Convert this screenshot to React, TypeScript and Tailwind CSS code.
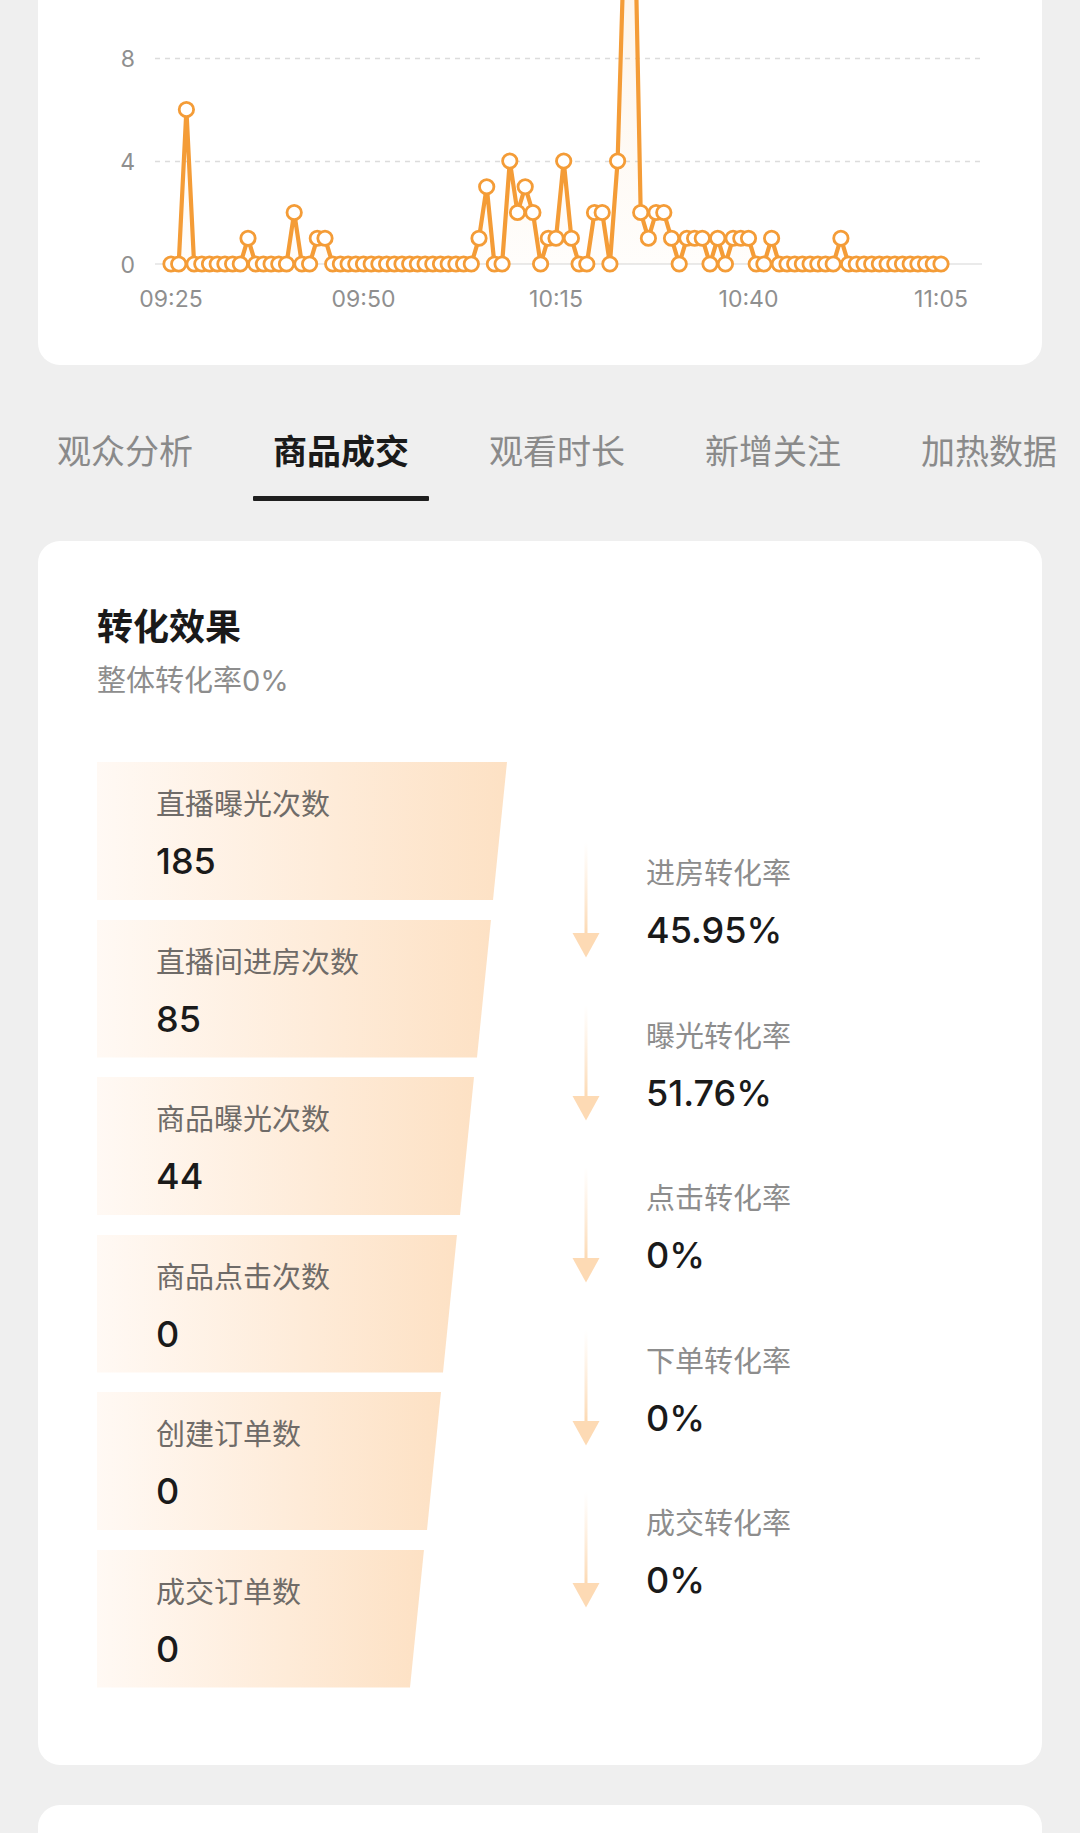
import React from "react";

const z = (n: number) => Array.from({ length: n }, () => 0);
const data: number[] = [
  ...[0, 0, 6, 0, 0, 0, 0, 0, 0, 0, 1, 0, 0, 0, 0, 0, 2, 0, 0, 1, 1],
  ...z(19),
  ...[1, 3, 0, 0, 4, 2, 3, 2, 0, 1, 1, 4, 1, 0, 0, 2, 2, 0, 4, 14, 17, 2, 1, 2, 2, 1, 0, 1, 1, 1, 0, 1, 0, 1, 1, 1, 0, 0, 1],
  ...z(8),
  1,
  ...z(13),
];

const X0 = 171;
const DX = 7.7;
const BASE = 264;
const UNIT = 25.75;

function Chart() {
  const pts = data.map((v, i) => [X0 + i * DX, BASE - v * UNIT] as const);
  const line = pts.map((p, i) => `${i === 0 ? "M" : "L"}${p[0].toFixed(1)} ${p[1].toFixed(1)}`).join(" ");
  const area = `${line} L${pts[pts.length - 1][0].toFixed(1)} ${BASE} L${pts[0][0].toFixed(1)} ${BASE} Z`;
  const xLabels = [
    { x: 171, t: "09:25" },
    { x: 363.5, t: "09:50" },
    { x: 556, t: "10:15" },
    { x: 748.5, t: "10:40" },
    { x: 941, t: "11:05" },
  ];
  const yLabels = [
    { y: 59, t: "8" },
    { y: 162, t: "4" },
    { y: 265, t: "0" },
  ];
  return (
    <svg width={1004} height={365} viewBox="38 0 1004 365" className="block">
      <defs>
        <linearGradient id="areaFill" x1="0" y1="-200" x2="0" y2="264" gradientUnits="userSpaceOnUse">
          <stop offset="0" stopColor="#f5a03c" stopOpacity="0.16" />
          <stop offset="1" stopColor="#f5a03c" stopOpacity="0.02" />
        </linearGradient>
      </defs>
      <line x1={155} x2={982} y1={58.5} y2={58.5} stroke="#dcdcdc" strokeWidth={1.3} strokeDasharray="5 5" />
      <line x1={155} x2={982} y1={161.5} y2={161.5} stroke="#dcdcdc" strokeWidth={1.3} strokeDasharray="5 5" />
      <line x1={155} x2={982} y1={264} y2={264} stroke="#e3e3e3" strokeWidth={1.3} />
      {yLabels.map((l) => (
        <text key={l.t} x={135} y={l.y} textAnchor="end" dominantBaseline="central" fontSize={23} fill="#8f8f8f" fontFamily="Inter, 'Noto Sans', sans-serif">
          {l.t}
        </text>
      ))}
      {xLabels.map((l) => (
        <text key={l.t} x={l.x} y={299} textAnchor="middle" dominantBaseline="central" fontSize={23} fill="#8f8f8f" fontFamily="Inter, 'Noto Sans', sans-serif">
          {l.t}
        </text>
      ))}
      <path d={area} fill="url(#areaFill)" />
      <path d={line} fill="none" stroke="#f49c37" strokeWidth={4.2} strokeLinejoin="round" />
      {pts.map((p, i) => (
        <circle key={i} cx={p[0]} cy={p[1]} r={7.2} fill="#ffffff" stroke="#f49c37" strokeWidth={2.8} />
      ))}
    </svg>
  );
}

const tabs = ["观众分析", "商品成交", "观看时长", "新增关注", "加热数据"];

const bars = [
  { label: "直播曝光次数", value: "185", w: "w-[410px]" },
  { label: "直播间进房次数", value: "85", w: "w-[394px]" },
  { label: "商品曝光次数", value: "44", w: "w-[377px]" },
  { label: "商品点击次数", value: "0", w: "w-[360px]" },
  { label: "创建订单数", value: "0", w: "w-[344px]" },
  { label: "成交订单数", value: "0", w: "w-[327px]" },
];

const rates = [
  { label: "进房转化率", value: "45.95%" },
  { label: "曝光转化率", value: "51.76%" },
  { label: "点击转化率", value: "0%" },
  { label: "下单转化率", value: "0%" },
  { label: "成交转化率", value: "0%" },
];

function Arrow({ id }: { id: string }) {
  return (
    <svg width={28} height={116} viewBox="0 0 28 116" className="block shrink-0">
      <defs>
        <linearGradient id={id} x1="0" y1="0" x2="0" y2="1">
          <stop offset="0" stopColor="#fde3c8" stopOpacity="0" />
          <stop offset="1" stopColor="#fcd9b2" stopOpacity="1" />
        </linearGradient>
      </defs>
      <rect x={12.5} y={0} width={3} height={92} fill={`url(#${id})`} />
      <path d="M0.5 91 L27.5 91 L14 115.5 Z" fill="#fddab4" />
    </svg>
  );
}

export default function App() {
  return (
    <div className="min-h-[1833px] h-[1833px] overflow-hidden bg-[#efefef] font-['Inter','Noto_Sans_CJK_SC',sans-serif]">
      <div className="mx-[38px] h-[365px] overflow-hidden rounded-b-[22px] bg-white">
        <Chart />
      </div>

      <div className="mt-[63px] flex gap-[80px] whitespace-nowrap pl-[57px]">
        {tabs.map((t, i) => (
          <div key={t} className="flex w-[136px] shrink-0 flex-col items-center">
            <div
              className={
                i === 1
                  ? "text-[34px] leading-[48px] font-semibold text-[#1a1a1a]"
                  : "text-[34px] leading-[48px] text-[#8a8a8a]"
              }
            >
              {t}
            </div>
            <div className={i === 1 ? "mt-[20px] h-[5px] w-[176px] shrink-0 rounded-[1px] bg-[#1f1f1f]" : "mt-[20px] h-[5px] w-[176px] shrink-0"} />
          </div>
        ))}
      </div>

      <div className="mx-[38px] mt-[40px] rounded-[22px] bg-white pb-[77px] pl-[59px] pt-[66px]">
        <div className="text-[36px] leading-[40px] font-semibold text-[#1a1a1a]">转化效果</div>
        <div className="mt-[16px] text-[29px] leading-[36px] text-[#8d8d8d]">整体转化率0%</div>

        <div className="mt-[63px] flex">
          <div className="flex w-[410px] flex-col gap-[19.5px]">
            {bars.map((b) => (
              <div
                key={b.label}
                className={`${b.w} h-[138px] bg-linear-to-r from-[#fff9f4] to-[#fde1c4] pl-[59px] pt-[25px] [clip-path:polygon(0_0,100%_0,calc(100%_-_14px)_100%,0_100%)]`}
              >
                <div className="text-[29px] leading-[36px] text-[#6f6b68]">{b.label}</div>
                <div className="mt-[16px] text-[36px] leading-[44px] font-medium text-[#1a1a1a]">{b.value}</div>
              </div>
            ))}
          </div>

          <div className="ml-[65px] flex flex-col pt-[80px]">
            {rates.map((r, i) => (
              <div key={r.label} className="flex h-[162.5px] gap-[46px]">
                <Arrow id={`arrowGrad${i}`} />
                <div className="pt-[14px]">
                  <div className="text-[29px] leading-[36px] text-[#8d8d8d]">{r.label}</div>
                  <div className="mt-[16px] text-[36px] leading-[44px] font-medium text-[#1a1a1a]">{r.value}</div>
                </div>
              </div>
            ))}
          </div>
        </div>
      </div>

      <div className="mx-[38px] mt-[40px] h-[80px] rounded-t-[22px] bg-white" />
    </div>
  );
}
